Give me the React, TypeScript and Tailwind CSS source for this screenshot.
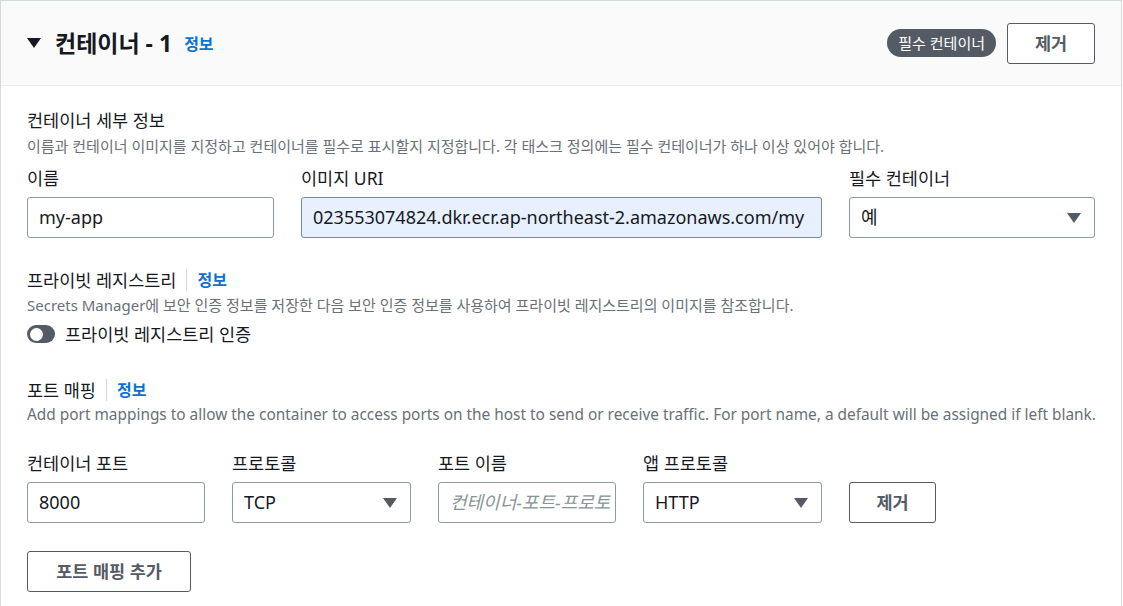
import React from 'react';

const FONT = '"Noto Sans", "Noto Sans CJK KR", sans-serif';

const Caret = () => (
  <svg width="14" height="10" viewBox="0 0 14 10" className="shrink-0">
    <path d="M0 0H14L7 10Z" fill="#545b64" />
  </svg>
);

const Info = () => <span className="text-[16px] font-bold text-[#0972d3]">정보</span>;

const Field = ({ label, children, className = '' }: { label: string; children: React.ReactNode; className?: string }) => (
  <div className={`flex flex-col ${className}`}>
    <label className="text-[17.5px] leading-[24px] text-[#16191f] mb-[7px] whitespace-nowrap">{label}</label>
    {children}
  </div>
);

const TextBox = ({ value, placeholder, highlight }: { value?: string; placeholder?: string; highlight?: boolean }) => (
  <div
    className={`h-[41px] rounded-[3px] border flex items-center px-[11px] overflow-hidden whitespace-nowrap text-[18px] ${
      highlight ? 'bg-[#e8f0fe] border-[#7d8998]' : 'bg-white border-[#8d99a8]'
    }`}
  >
    {value ? (
      <span className="text-[#16191f]">{value}</span>
    ) : (
      <span className="text-[#879596] italic">{placeholder}</span>
    )}
  </div>
);

const SelectBox = ({ value }: { value: string }) => (
  <div className="h-[41px] rounded-[3px] border border-[#8d99a8] bg-white flex items-center justify-between pl-[11px] pr-[13px] text-[18px] text-[#16191f]">
    <span>{value}</span>
    <Caret />
  </div>
);

const Button = ({ children, className = '' }: { children: React.ReactNode; className?: string }) => (
  <button className={`h-[41px] rounded-[3px] border border-[#545b64] bg-white text-[17.5px] font-bold text-[#545b64] ${className}`}>
    {children}
  </button>
);

const SectionTitle = ({ title }: { title: string }) => (
  <div className="flex items-center h-[24px]">
    <span className="text-[17.5px] text-[#16191f]">{title}</span>
    <span className="mx-[10px] h-[22px] w-px bg-[#d5dbdb]" />
    <Info />
  </div>
);

export default function App() {
  return (
    <div className="w-[1123px] h-[606px] overflow-hidden bg-white" style={{ fontFamily: FONT }}>
      <div className="w-[1122px] border border-[#d5dbdb] border-b-0 bg-white min-h-[620px]">
        {/* 헤더 */}
        <div className="h-[85px] bg-[#fafafa] border-b border-[#eaeded] flex items-center justify-between pl-[26px] pr-[26px]">
          <div className="flex items-center">
            <svg width="14" height="12" viewBox="0 0 14 12" className="mr-[14px]">
              <path d="M0 1H14L7 11Z" fill="#16191f" />
            </svg>
            <h2 className="text-[23px] font-bold text-[#16191f]">컨테이너 - 1</h2>
            <span className="ml-[12px] mt-[2px]"><Info /></span>
          </div>
          <div className="flex items-center gap-[11px]">
            <span className="h-[28px] px-[11px] rounded-full bg-[#545b64] text-white text-[15px] flex items-center">필수 컨테이너</span>
            <Button className="w-[88px]">제거</Button>
          </div>
        </div>

        {/* 본문 */}
        <div className="px-[26px] pt-[21px]">
          <div className="text-[17.5px] leading-[26px] text-[#16191f]">컨테이너 세부 정보</div>
          <div className="text-[15px] leading-[22px] mt-[2px] text-[#687078]">
            이름과 컨테이너 이미지를 지정하고 컨테이너를 필수로 표시할지 지정합니다. 각 태스크 정의에는 필수 컨테이너가 하나 이상 있어야 합니다.
          </div>
          <div className="flex gap-[27px] mt-[9px]">
            <Field label="이름" className="w-[247px]">
              <TextBox value="my-app" />
            </Field>
            <Field label="이미지 URI" className="w-[521px]">
              <TextBox value="023553074824.dkr.ecr.ap-northeast-2.amazonaws.com/my" highlight />
            </Field>
            <Field label="필수 컨테이너" className="w-[246px]">
              <SelectBox value="예" />
            </Field>
          </div>

          <div className="mt-[30px]">
            <SectionTitle title="프라이빗 레지스트리" />
            <div className="text-[15px] leading-[22px] text-[#687078] mt-[2px] whitespace-nowrap">
              Secrets Manager에 보안 인증 정보를 저장한 다음 보안 인증 정보를 사용하여 프라이빗 레지스트리의 이미지를 참조합니다.
            </div>
            <div className="flex items-center h-[24px] mt-[6px]">
              <span className="w-[28px] h-[18px] rounded-full bg-[#545b64] flex items-center pl-[3px]">
                <span className="w-[13px] h-[13px] rounded-full bg-white" />
              </span>
              <span className="ml-[10px] text-[17.5px] text-[#16191f]">프라이빗 레지스트리 인증</span>
            </div>
          </div>

          <div className="mt-[32px]">
            <SectionTitle title="포트 매핑" />
            <div className="text-[15.4px] leading-[22px] text-[#687078] mt-[2px] whitespace-nowrap">
              Add port mappings to allow the container to access ports on the host to send or receive traffic. For port name, a default will be assigned if left blank.
            </div>
            <div className="flex items-end gap-[27px] mt-[25px]">
              <Field label="컨테이너 포트" className="w-[178px]">
                <TextBox value="8000" />
              </Field>
              <Field label="프로토콜" className="w-[179px]">
                <SelectBox value="TCP" />
              </Field>
              <Field label="포트 이름" className="w-[178px]">
                <TextBox placeholder="컨테이너-포트-프로토" />
              </Field>
              <Field label="앱 프로토콜" className="w-[179px]">
                <SelectBox value="HTTP" />
              </Field>
              <Button className="w-[87px]">제거</Button>
            </div>
            <Button className="w-[164px] mt-[28px]">포트 매핑 추가</Button>
          </div>
        </div>
      </div>
    </div>
  );
}
